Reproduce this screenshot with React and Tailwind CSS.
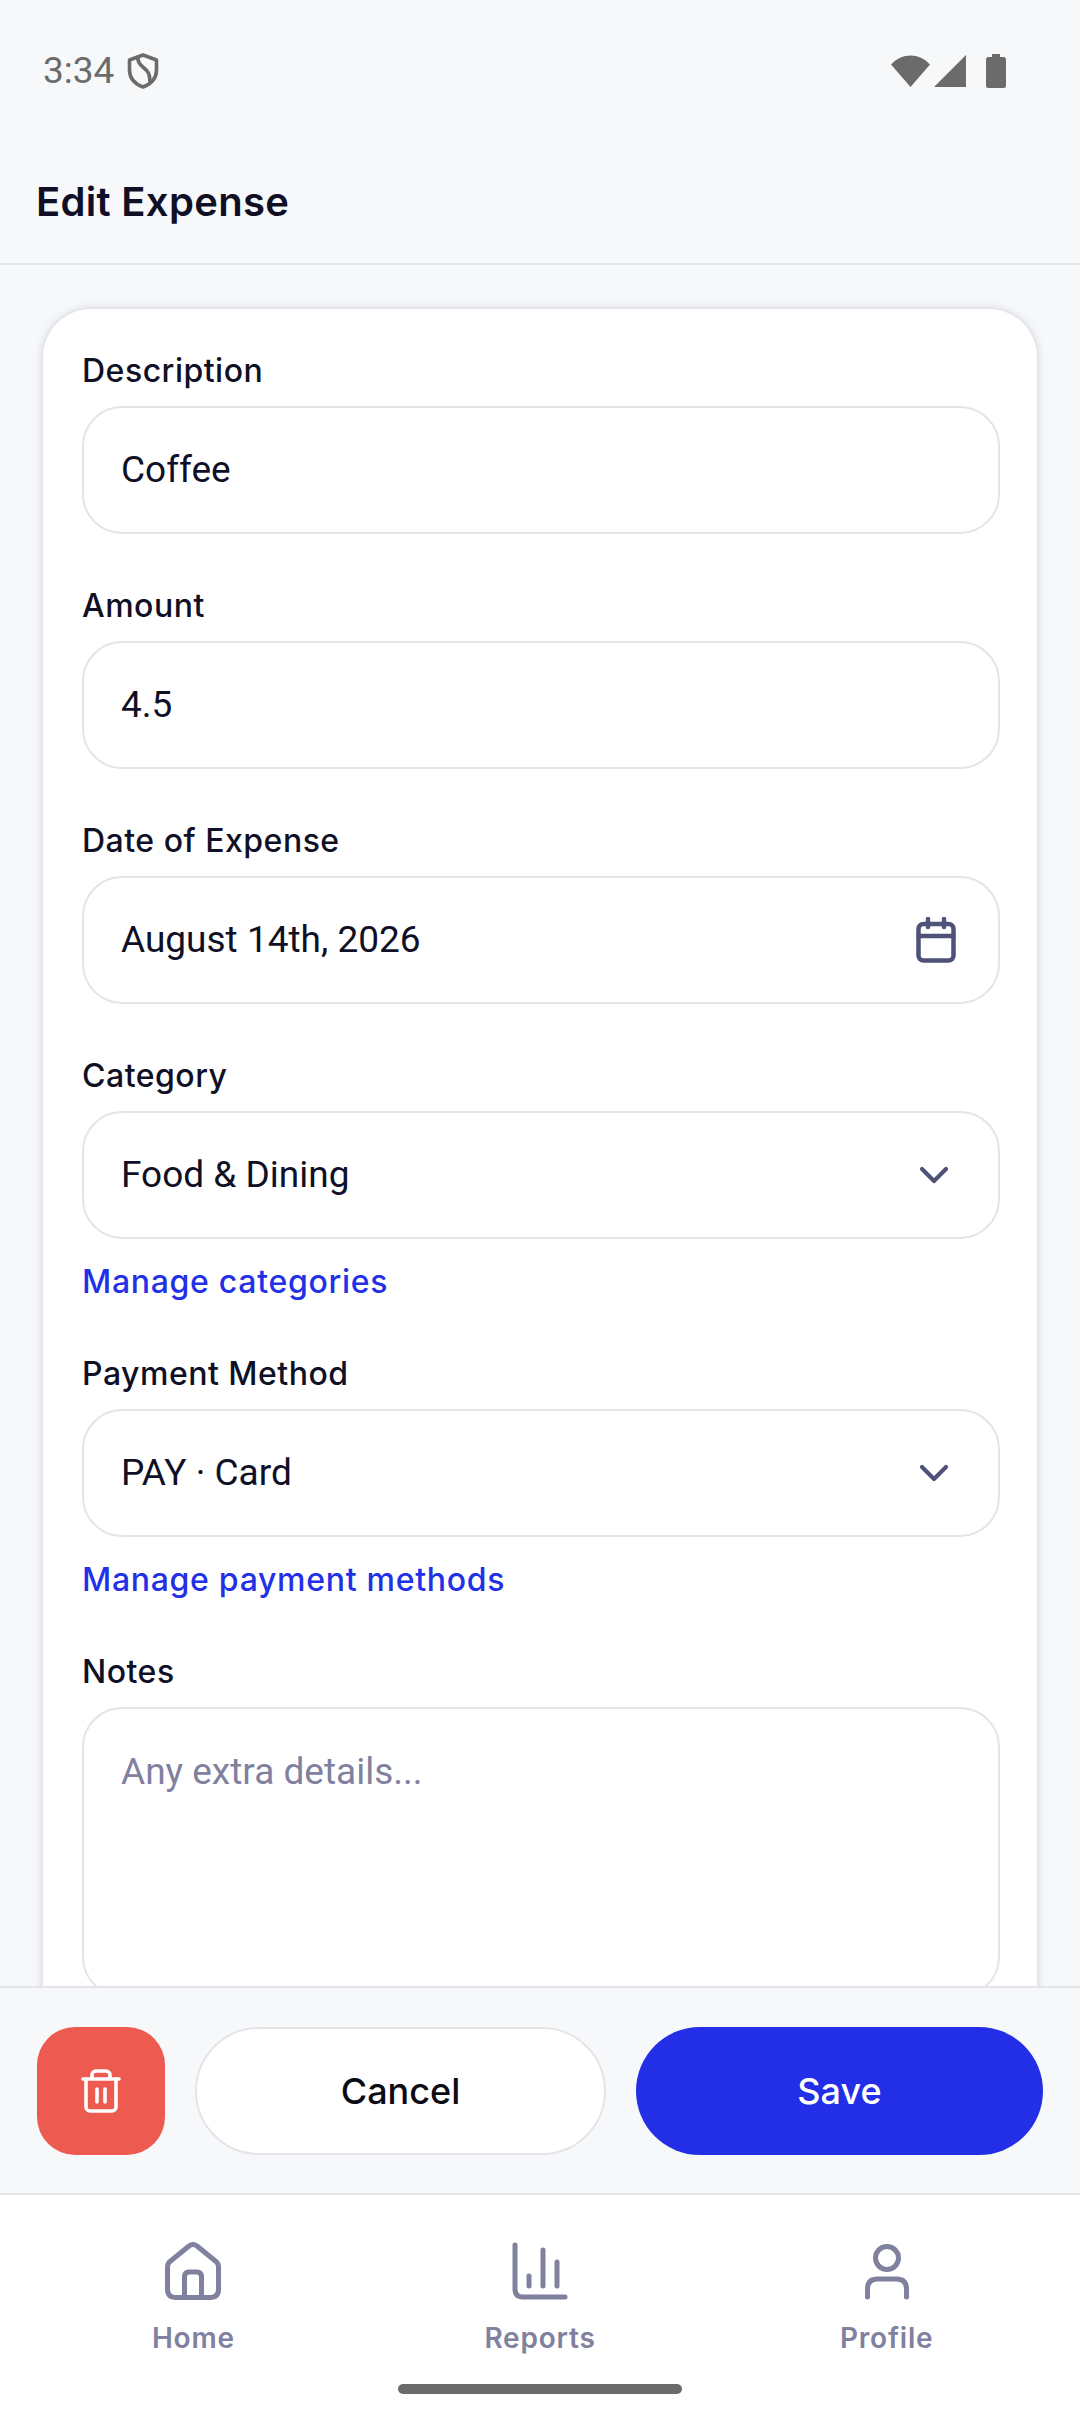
import React from 'react';
import { ChevronDown } from 'lucide-react';

const labelCls = "h-[44px] text-[32px] leading-[44px] tracking-[0.5px] font-medium text-[#0f1025] font-[Inter,sans-serif]";
const boxCls = "h-[128px] rounded-[40px] border-2 border-[#e4e5e9] bg-white pl-[37px] pr-[36px] flex items-center justify-between text-[37px] text-[#0f1025] font-[Roboto,sans-serif]";
const linkCls = "mt-[21px] h-[44px] text-[32px] leading-[44px] tracking-[0.7px] font-medium text-[#2230e6] font-[Inter,sans-serif]";

const CalendarIcon = () => (
  <svg width="40" height="46" viewBox="0 0 40 46" fill="none" stroke="#4f5278" strokeWidth="4.5" strokeLinecap="round" strokeLinejoin="round" className="mr-[6px]">
    <rect x="2.5" y="7" width="35" height="36.5" rx="5" />
    <path d="M2.5 19H37.5M12 2V10M28 2V10" />
  </svg>
);

const Field = ({ label, children, right, link, className }) => (
  <div className={className}>
    <div className={labelCls}>{label}</div>
    <div className={`mt-[13px] ${boxCls}`}>
      <span>{children}</span>
      {right}
    </div>
    {link && <div className={linkCls}>{link}</div>}
  </div>
);

const Chevron = () => <ChevronDown size={48} strokeWidth={2.1} color="#4f5278" className="mr-[4px]" />;

const StatusBar = () => (
  <div className="h-[140px] flex items-center justify-between pl-[43px] pr-[74px] pt-[1px]">
    <div className="flex items-center gap-[13px]">
      <span className="text-[37px] text-[#6b6b6b] font-[Roboto,sans-serif]">3:34</span>
      <svg width="32" height="36" viewBox="0 0 32 36" fill="none" stroke="#6b6b6b" strokeWidth="3.6" strokeLinejoin="round">
        <path d="M16 2L29.5 7V17C29.5 25 24 31 16 34C8 31 2.5 25 2.5 17V7Z" />
        <path d="M11 3.5C10 9 13 12 17 15C21 18 23 21 23 30" />
      </svg>
    </div>
    <div className="flex items-center gap-[19px]">
      <svg width="76" height="34" viewBox="0 0 76 34" fill="#6b6b6b">
        <path d="M0 10.5C11-1.5 28-1.5 39 10.5L19.5 33Z" />
        <path d="M43 33L75 1V33Z" />
      </svg>
      <svg width="20" height="34" viewBox="0 0 20 34" fill="#6b6b6b">
        <path d="M6 0H14V3H17.5A2.5 2.5 0 0 1 20 5.5V31.5A2.5 2.5 0 0 1 17.5 34H2.5A2.5 2.5 0 0 1 0 31.5V5.5A2.5 2.5 0 0 1 2.5 3H6Z" />
      </svg>
    </div>
  </div>
);

const NavItem = ({ label, children }) => (
  <div className="flex-1 flex flex-col items-center">
    <div className="h-[58px] flex items-end">{children}</div>
    <div className="mt-[19px] text-[28px] leading-[38px] tracking-[0.8px] font-semibold text-[#7f819f] font-[Inter,sans-serif]">{label}</div>
  </div>
);

const App = () => {
  return (
    <div className="w-[1080px] h-[2424px] flex flex-col overflow-hidden bg-[#f6f8fa]">
      <div className="border-b-2 border-[#e4e5e9]">
        <StatusBar />
        <div className="h-[123px] flex items-center pl-[36px] text-[40px] tracking-[0.3px] font-semibold text-[#0f1025] font-[Inter,sans-serif]">
          Edit Expense
        </div>
      </div>

      <div className="flex-1 min-h-0 overflow-hidden px-[43px] pt-[44px]">
        <div className="rounded-[48px] bg-white pl-[39px] pr-[37px] pt-[40px] pb-[40px] shadow-[0_0_8px_rgba(90,95,130,0.28)]">
          <Field label="Description">Coffee</Field>
          <Field label="Amount" className="mt-[50px]">4.5</Field>
          <Field label="Date of Expense" className="mt-[50px]" right={<CalendarIcon />}>August 14th, 2026</Field>
          <Field label="Category" className="mt-[50px]" right={<Chevron />} link="Manage categories">Food &amp; Dining</Field>
          <Field label="Payment Method" className="mt-[48px]" right={<Chevron />} link="Manage payment methods">PAY · Card</Field>
          <div className="mt-[48px]">
            <div className={labelCls}>Notes</div>
            <div className="mt-[13px] h-[290px] rounded-[40px] border-2 border-[#e4e5e9] pl-[37px] pt-[41px] text-[37px] leading-[44px] text-[#7f819f] font-[Roboto,sans-serif]">
              Any extra details...
            </div>
          </div>
        </div>
      </div>

      <div className="h-[209px] shrink-0 border-y-2 border-[#e4e5e9] px-[37px] flex items-center gap-[30px] bg-[#f6f8fa]">
        <button className="w-[128px] h-[128px] shrink-0 rounded-[38px] bg-[#ec5a50] flex items-center justify-center">
          <svg width="40" height="44" viewBox="0 0 40 44" fill="none" stroke="#fff" strokeWidth="3.6" strokeLinecap="round" strokeLinejoin="round">
            <path d="M2 10H38M11 10V6A4 4 0 0 1 15 2H25A4 4 0 0 1 29 6V10" />
            <path d="M5 10V38A4 4 0 0 0 9 42H31A4 4 0 0 0 35 38V10" />
            <path d="M16 20V33M24 20V33" />
          </svg>
        </button>
        <button className="flex-1 h-[128px] rounded-full border-2 border-[#e4e5e9] bg-white text-[36px] font-medium text-[#0b0b14] font-[Inter,sans-serif]">
          Cancel
        </button>
        <button className="flex-1 h-[128px] rounded-full bg-[#222fe6] text-[36px] font-medium text-white font-[Inter,sans-serif]">
          Save
        </button>
      </div>

      <div className="h-[229px] shrink-0 bg-white flex flex-col">
        <div className="flex px-[20px] pt-[47px]">
          <NavItem label="Home">
            <svg width="56" height="58" viewBox="0 0 56 58" fill="none" stroke="#7f819f" strokeWidth="5" strokeLinecap="round" strokeLinejoin="round">
              <path d="M2.5 25Q2.5 21.5 5 19.5L24 4Q28 1 32 4L51 19.5Q53.5 21.5 53.5 25V47Q53.5 55.5 45 55.5H11Q2.5 55.5 2.5 47Z" />
              <path d="M19.5 55.5V35Q19.5 30 24 30H32Q36.5 30 36.5 35V55.5" />
            </svg>
          </NavItem>
          <NavItem label="Reports">
            <svg width="56" height="58" viewBox="0 0 56 58" fill="none" stroke="#7f819f" strokeWidth="5" strokeLinecap="round" strokeLinejoin="round">
              <path d="M3 3V47Q3 55 11 55H53" />
              <path d="M17 34V44M31 8V44M45 20V44" />
            </svg>
          </NavItem>
          <NavItem label="Profile">
            <svg width="44" height="58" viewBox="0 0 44 58" fill="none" stroke="#7f819f" strokeWidth="5" strokeLinecap="round" strokeLinejoin="round">
              <circle cx="22" cy="16" r="11.5" />
              <path d="M2.5 55V47Q2.5 37 12.5 37H31.5Q41.5 37 41.5 47V55" />
            </svg>
          </NavItem>
        </div>
        <div className="mt-[27px] mx-auto w-[284px] h-[10px] rounded-full bg-[#6b6b6b]" />
      </div>
    </div>
  );
};

export default App;
